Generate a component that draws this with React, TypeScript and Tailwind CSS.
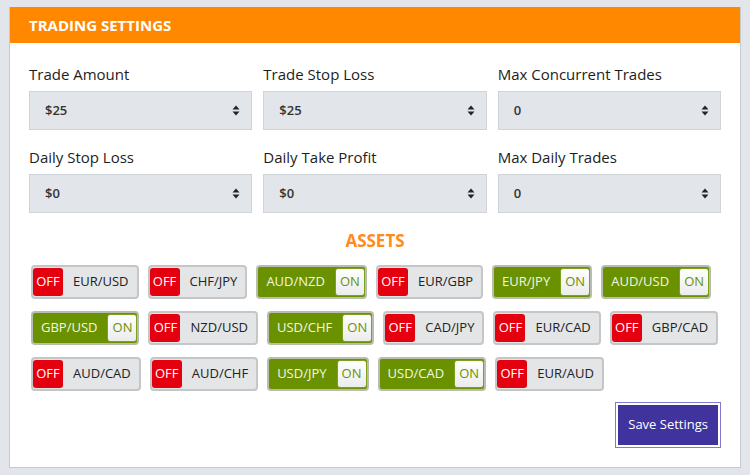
import { useState } from "react";

const font = { fontFamily: '"Open Sans", "Noto Sans", sans-serif' };

const fields = [
    { label: "Trade Amount", value: "$25" },
    { label: "Trade Stop Loss", value: "$25" },
    { label: "Max Concurrent Trades", value: "0" },
    { label: "Daily Stop Loss", value: "$0" },
    { label: "Daily Take Profit", value: "$0" },
    { label: "Max Daily Trades", value: "0" },
];

const initialAssets: [string, boolean][] = [
    ["EUR/USD", false],
    ["CHF/JPY", false],
    ["AUD/NZD", true],
    ["EUR/GBP", false],
    ["EUR/JPY", true],
    ["AUD/USD", true],
    ["GBP/USD", true],
    ["NZD/USD", false],
    ["USD/CHF", true],
    ["CAD/JPY", false],
    ["EUR/CAD", false],
    ["GBP/CAD", false],
    ["AUD/CAD", false],
    ["AUD/CHF", false],
    ["USD/JPY", true],
    ["USD/CAD", true],
    ["EUR/AUD", false],
];

function SelectBox({ value }: { value: string }) {
    return (
        <div className="flex h-[39px] items-center justify-between border border-[#cfd4d9] bg-[#e2e6ea] pl-[15px] pr-[11px]">
            <span className="text-[13px] font-semibold text-[#333]">{value}</span>
            <svg width="8" height="11" viewBox="0 0 8 11">
                <path d="M4 0.5 L7.5 4.5 L0.5 4.5 Z" fill="#222" />
                <path d="M4 10.5 L7.5 6.5 L0.5 6.5 Z" fill="#222" />
            </svg>
        </div>
    );
}

function AssetToggle({ name, on, onToggle }: { name: string; on: boolean; onToggle: () => void }) {
    if (on) {
        return (
            <button
                onClick={onToggle}
                className="flex h-[34px] items-center rounded-[4px] border-2 border-[#b9bdb0] bg-[#6a9200] py-px text-[13px]"
            >
                <span className="pl-[8px] pr-[10px] text-[#f2f7e4]">{name}</span>
                <span className="flex h-full w-[30px] items-center justify-center rounded-[3px] border border-[#7ca21a] bg-gradient-to-b from-white to-[#ececec] text-[#6a9200]">
                    ON
                </span>
            </button>
        );
    }
    return (
        <button
            onClick={onToggle}
            className="flex h-[34px] items-center rounded-[4px] border-2 border-[#c4c6c8] bg-[#e3e5e7] py-px text-[13px]"
        >
            <span className="flex h-full w-[30px] items-center justify-center rounded-[3px] bg-[#e4000f] text-white">OFF</span>
            <span className="pl-[10px] pr-[8px] text-[#222]">{name}</span>
        </button>
    );
}

export default function App() {
    const [assets, setAssets] = useState(initialAssets);

    function toggle(idx: number) {
        setAssets((prev) => prev.map((a, i) => (i === idx ? [a[0], !a[1]] : a)));
    }

    return (
        <div className="h-[475px] w-[750px] bg-[#e2e6ea] pt-[7px] pl-[9px]" style={font}>
            <div className="h-[461px] w-[732px] border border-[#c6cacd] border-t-0 bg-white">
                <div className="flex h-[36px] items-center bg-[#ff8800] px-[19px]">
                    <h1 className="text-[15px] font-bold text-white">TRADING SETTINGS</h1>
                </div>

                <div className="px-[19px] pt-[21px]">
                    <div className="grid grid-cols-3 gap-x-[11px] gap-y-[17px]">
                        {fields.map((f) => (
                            <div key={f.label} className="flex flex-col gap-[7px]">
                                <label className="text-[15px] leading-[20px] text-[#1d1d1d]">{f.label}</label>
                                <SelectBox value={f.value} />
                            </div>
                        ))}
                    </div>

                    <h2 className="mt-[17px] text-center text-[17px] font-bold leading-[22px] text-[#ff8c1a]">ASSETS</h2>

                    <div className="-mr-[6px] mt-[13px] flex flex-wrap gap-x-[9px] gap-y-[12px] pl-[2px]">
                        {assets.map(([name, on], idx) => (
                            <AssetToggle key={name} name={name} on={on} onToggle={() => toggle(idx)} />
                        ))}
                    </div>

                    <div className="mt-[11px] flex justify-end">
                        <button className="border border-[#8479d0] bg-white p-[2px]">
                            <span className="flex h-[40px] items-center bg-[#40339d] px-[10px] text-[13px] text-white">
                                Save Settings
                            </span>
                        </button>
                    </div>
                </div>
            </div>
        </div>
    );
}
